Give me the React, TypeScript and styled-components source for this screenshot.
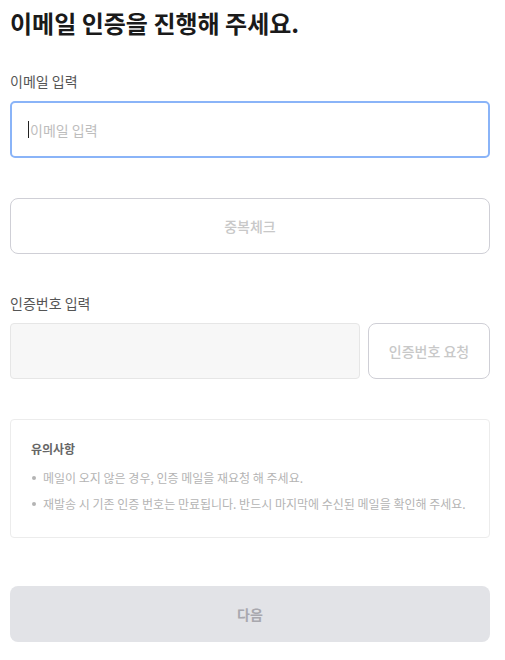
import React from "react";
import styled, { createGlobalStyle } from "styled-components";

const Global = createGlobalStyle`
  html, body { margin: 0; padding: 0; background: #fff; }
  body { font-family: "Noto Sans CJK KR", "Noto Sans", sans-serif; color: #222; }
  * { box-sizing: border-box; }
`;

const Page = styled.div`
  width: 505px;
  padding: 6px 15px 0 10px;
  display: flex;
  flex-direction: column;
`;

const Title = styled.h1`
  margin: 0;
  font-size: 24px;
  font-weight: 700;
  line-height: 34px;
  color: #1a1a1a;
`;

const Label = styled.div<{ $mt: number }>`
  margin-top: ${(p) => p.$mt}px;
  font-size: 14px;
  line-height: 20px;
  color: #555;
`;

const TextInput = styled.div<{ $focused?: boolean; $disabled?: boolean }>`
  margin-top: 10px;
  height: 57px;
  display: flex;
  align-items: center;
  padding-left: 16px;
  border-radius: ${(p) => (p.$disabled ? "4px" : "5px")};
  border: ${(p) =>
    p.$focused ? "2px solid #8ab4f8" : p.$disabled ? "1px solid #e6e6e6" : "1px solid #ccc"};
  background: ${(p) => (p.$disabled ? "#f7f7f7" : "#fff")};
  font-size: 14px;
  color: #bdbdbd;
  flex-shrink: 0;
`;

const Caret = styled.span`
  display: inline-block;
  width: 1px;
  height: 17px;
  background: #222;
  margin-right: 1px;
`;

const OutlineButton = styled.button<{ $mt?: number; $width?: string }>`
  margin-top: ${(p) => p.$mt ?? 0}px;
  height: 56px;
  width: ${(p) => p.$width ?? "100%"};
  border: 1px solid #cfcfd6;
  border-radius: 8px;
  background: #fff;
  color: #c8c8c8;
  font-family: inherit;
  font-size: 14px;
  font-weight: 500;
  flex-shrink: 0;
`;

const Row = styled.div`
  margin-top: 10px;
  display: flex;
  gap: 8px;
  align-items: stretch;
  & > ${TextInput} { margin-top: 0; height: 56px; flex: 1; }
`;

const Notice = styled.div`
  margin-top: 40px;
  border: 1px solid #ececec;
  border-radius: 4px;
  padding: 19px 20px 20px 20px;
  height: 119px;
`;

const NoticeTitle = styled.div`
  font-size: 12px;
  font-weight: 700;
  color: #666;
  line-height: 20px;
`;

const List = styled.ul`
  margin: 9px 0 0 0;
  padding: 0;
  list-style: none;
  display: flex;
  flex-direction: column;
  gap: 6px;
`;

const Item = styled.li`
  position: relative;
  padding-left: 12px;
  font-size: 12px;
  line-height: 20px;
  color: #b4b4b4;
  &::before {
    content: "";
    position: absolute;
    left: 1px;
    top: 8px;
    width: 4px;
    height: 4px;
    border-radius: 50%;
    background: #b4b4b4;
  }
`;

const NextButton = styled.button`
  margin-top: 48px;
  height: 56px;
  width: 100%;
  border: none;
  border-radius: 8px;
  background: #e2e3e7;
  color: #a8a8ae;
  font-family: inherit;
  font-size: 14px;
  font-weight: 700;
`;

export default function App() {
  return (
    <>
      <Global />
      <Page>
        <Title>이메일 인증을 진행해 주세요.</Title>
        <Label $mt={31}>이메일 입력</Label>
        <TextInput $focused>
          <Caret />
          이메일 입력
        </TextInput>
        <OutlineButton $mt={40}>중복체크</OutlineButton>
        <Label $mt={39}>인증번호 입력</Label>
        <Row>
          <TextInput $disabled />
          <OutlineButton $width="122px">인증번호 요청</OutlineButton>
        </Row>
        <Notice>
          <NoticeTitle>유의사항</NoticeTitle>
          <List>
            <Item>메일이 오지 않은 경우, 인증 메일을 재요청 해 주세요.</Item>
            <Item>재발송 시 기존 인증 번호는 만료됩니다. 반드시 마지막에 수신된 메일을 확인해 주세요.</Item>
          </List>
        </Notice>
        <NextButton>다음</NextButton>
      </Page>
    </>
  );
}
